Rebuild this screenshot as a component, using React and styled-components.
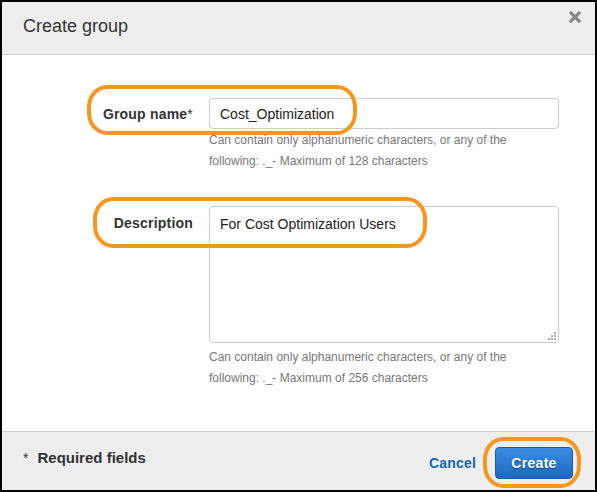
import React from "react";
import styled, { createGlobalStyle } from "styled-components";

const Global = createGlobalStyle`
  html, body { margin: 0; padding: 0; background: #fff; }
  body { font-family: "Liberation Sans", Arial, sans-serif; }
  * { box-sizing: border-box; }
`;

const Frame = styled.div`
  position: relative;
  width: 597px;
  height: 492px;
  border: 2px solid #000;
  display: flex;
  flex-direction: column;
  background: #fff;
  overflow: hidden;
`;

const Header = styled.div`
  height: 53px;
  flex: none;
  background: #eeeeee;
  border-bottom: 1px solid #cccccc;
  display: flex;
  align-items: flex-start;
  justify-content: space-between;
  padding: 13px 13px 0 21px;
`;

const Title = styled.h2`
  margin: 0;
  font-size: 18px;
  font-weight: normal;
  color: #333;
  line-height: 22px;
`;

const Close = styled.button`
  border: 0;
  background: none;
  padding: 0;
  margin-top: -5px;
  width: 14px;
  height: 14px;
  display: flex;
  cursor: pointer;
`;

const Body = styled.div`
  flex: 1;
  padding: 43px 36px 0 0;
  display: flex;
  flex-direction: column;
  gap: 34px;
`;

const Row = styled.div`
  display: grid;
  grid-template-columns: 191px 350px;
  column-gap: 16px;
`;

const Label = styled.label`
  text-align: right;
  font-size: 14px;
  font-weight: bold;
  color: #333;
  padding-top: ${(p) => p.$top}px;
  line-height: 16px;
  letter-spacing: 0.2px;
`;

const Star = styled.span`
  font-weight: normal;
`;

const Field = styled.div`
  display: flex;
  flex-direction: column;
`;

const Input = styled.input`
  height: 31px;
  width: 100%;
  border: 1px solid #cccccc;
  border-radius: 4px;
  padding: 0 10px;
  font-family: "Liberation Sans", Arial, sans-serif;
  font-size: 14px;
  color: #222;
  outline: none;
`;

const AreaWrap = styled.div`
  position: relative;
  height: 137px;
`;

const Area = styled.textarea`
  width: 100%;
  height: 100%;
  border: 1px solid #cccccc;
  border-radius: 4px;
  padding: 8px 10px;
  font-family: "Liberation Sans", Arial, sans-serif;
  font-size: 14px;
  line-height: 18px;
  color: #222;
  resize: none;
  outline: none;
  display: block;
`;

const Grip = styled.svg`
  position: absolute;
  right: 3px;
  bottom: 3px;
`;

const Help = styled.div`
  margin-top: ${(p) => p.$gap}px;
  font-size: 12px;
  line-height: 21px;
  color: #777;
`;

const Footer = styled.div`
  height: 59px;
  flex: none;
  background: #eeeeee;
  border-top: 1px solid #cccccc;
  display: flex;
  align-items: center;
  justify-content: space-between;
  padding: 3px 22px 0 21px;
`;

const Required = styled.div`
  font-size: 14px;
  color: #333;
  margin-top: -10px;
  display: flex;
  align-items: baseline;
  gap: 9px;
`;

const Bold = styled.span`
  font-weight: bold;
  font-size: 15px;
`;

const Actions = styled.div`
  display: flex;
  align-items: center;
  gap: 19px;
`;

const Cancel = styled.a`
  font-size: 14px;
  font-weight: bold;
  color: #1166bb;
  letter-spacing: 0.2px;
  cursor: pointer;
`;

const Primary = styled.button`
  width: 78px;
  height: 32px;
  border-radius: 4px;
  border: 1px solid #1b5ca8;
  background: linear-gradient(#3a8ee3, #1f67c2);
  color: #fff;
  font-family: "Liberation Sans", Arial, sans-serif;
  font-size: 14px;
  font-weight: bold;
  letter-spacing: 0.3px;
  text-shadow: 0 1px 1px rgba(0, 0, 0, 0.5);
  cursor: pointer;
`;

const Highlight = styled.div`
  position: absolute;
  left: ${(p) => p.$x}px;
  top: ${(p) => p.$y}px;
  width: ${(p) => p.$w}px;
  height: ${(p) => p.$h}px;
  border: 4px solid #f7961c;
  border-radius: 20px / 22px;
  pointer-events: none;
`;

export default function App() {
  return (
    <>
      <Global />
      <Frame>
        <Header>
          <Title>Create group</Title>
          <Close aria-label="Close">
            <svg width="14" height="14" viewBox="0 0 14 14">
              <path d="M3 3 L11 11 M11 3 L3 11" stroke="#888" strokeWidth="3.2" strokeLinecap="square" />
            </svg>
          </Close>
        </Header>
        <Body>
          <Row>
            <Label $top={8}>
              Group name<Star>*</Star>
            </Label>
            <Field>
              <Input defaultValue="Cost_Optimization" />
              <Help $gap={1}>
                Can contain only alphanumeric characters, or any of the
                <br />
                following: ._- Maximum of 128 characters
              </Help>
            </Field>
          </Row>
          <Row>
            <Label $top={9}>Description</Label>
            <Field>
              <AreaWrap>
                <Area defaultValue="For Cost Optimization Users" />
                <Grip width="9" height="9" viewBox="0 0 9 9">
                  <g fill="#aaa">
                    <rect x="7" y="1" width="2" height="2" />
                    <rect x="4" y="4" width="2" height="2" />
                    <rect x="7" y="4" width="2" height="2" />
                    <rect x="1" y="7" width="2" height="2" />
                    <rect x="4" y="7" width="2" height="2" />
                    <rect x="7" y="7" width="2" height="2" />
                  </g>
                </Grip>
              </AreaWrap>
              <Help $gap={4}>
                Can contain only alphanumeric characters, or any of the
                <br />
                following: ._- Maximum of 256 characters
              </Help>
            </Field>
          </Row>
        </Body>
        <Footer>
          <Required>
            <span>*</span>
            <Bold>Required fields</Bold>
          </Required>
          <Actions>
            <Cancel>Cancel</Cancel>
            <Primary>Create</Primary>
          </Actions>
        </Footer>
        <Highlight $x={85} $y={83} $w={270} $h={50} />
        <Highlight $x={91} $y={195} $w={334} $h={51} />
        <Highlight $x={481} $y={435} $w={98} $h={51} />
      </Frame>
    </>
  );
}
